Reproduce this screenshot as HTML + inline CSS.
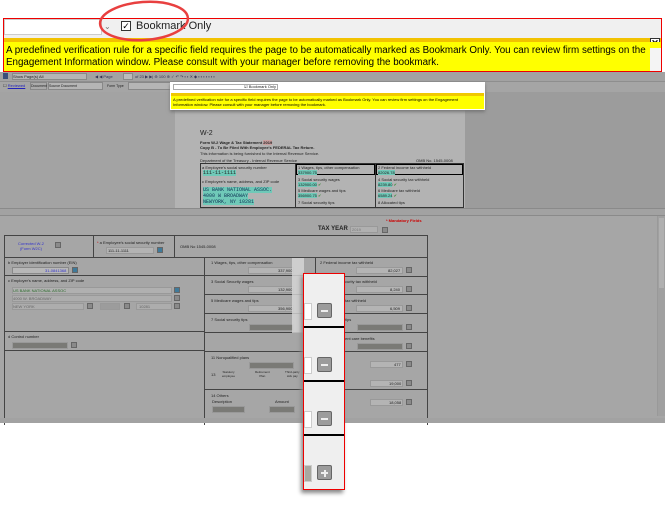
<!DOCTYPE html>
<html><head><meta charset="utf-8"><style>
*{margin:0;padding:0;box-sizing:border-box}
body{width:665px;height:507px;background:#fff;position:relative;overflow:hidden;font-family:"Liberation Sans",sans-serif}
.a{position:absolute}
.t{font-size:5px;color:#222;white-space:nowrap}
.box{position:absolute;border:1px solid #555}
.fld{position:absolute;background:#b4b4b4;border:1px solid #999;height:7px}
.dk{position:absolute;background:#7a7a76;border:1px solid #999;height:7px}
.btn{position:absolute;width:6px;height:6px;background:#8a8a8a;border:1px solid #666}
.v{font-size:5px;color:#333;text-align:right;padding-right:2px;line-height:6px}
</style></head><body>
<!-- app gray -->
<div class="a" style="left:0;top:72px;width:665px;height:351px;background:#a8a8a8"></div>
<!-- toolbars -->
<div class="a" style="left:0;top:72px;width:665px;height:10px;background:#a2a2a2;border-bottom:1px solid #8e8e8e"></div>
<div class="a t" style="left:3px;top:73px;width:5px;height:6px;background:#3a4f7a"></div>
<div class="a" style="left:12px;top:73px;width:75px;height:7px;background:#b5b5b5;border:1px solid #888"></div>
<div class="a t" style="left:13px;top:74px;font-size:4px">Show Page(s)  All</div>
<div class="a t" style="left:95px;top:74px;font-size:4px;color:#335">◀ ◀ Page</div>
<div class="a" style="left:123px;top:73px;width:10px;height:7px;background:#bbb;border:1px solid #888"></div>
<div class="a t" style="left:135px;top:74px;font-size:4px;color:#335">of 23 ▶ ▶|  ⊕ 100 ⊕ ✓ ↶ ↷  ▪ ▪ ✕ ◆ ▪ ▪ ▪ ▪ ▪ ▪ ▪</div>
<div class="a" style="left:0;top:82px;width:665px;height:10px;background:#a5a5a5"></div>
<div class="a t" style="left:3px;top:83px;font-size:4px">☐ <u style="color:#22b">Reviewed</u></div>
<div class="a" style="left:30px;top:82px;width:17px;height:8px;border:1px solid #888;background:#aaa"></div>
<div class="a t" style="left:31px;top:84px;font-size:3.5px">Document Type</div>
<div class="a" style="left:48px;top:82px;width:55px;height:8px;background:#b5b5b5;border:1px solid #888"></div>
<div class="a t" style="left:49px;top:84px;font-size:3.5px">Source Document</div>
<div class="a t" style="left:107px;top:84px;font-size:3.5px">Form Type</div>
<div class="a" style="left:128px;top:82px;width:45px;height:8px;background:#b5b5b5;border:1px solid #888"></div>
<!-- doc area -->
<div class="a" style="left:175px;top:92px;width:294px;height:116px;background:#b3b3b3"></div>
<div class="a" style="left:465px;top:92px;width:200px;height:116px;background:#9c9c9c"></div>
<div class="a" style="left:0px;top:92px;width:175px;height:116px;background:#a3a3a3"></div>
<!-- small callout -->
<div class="a" style="left:170px;top:82px;width:315px;height:28px;background:#fff;box-shadow:0 2px 3px #777"></div>
<div class="a" style="left:173px;top:84px;width:105px;height:6px;border:1px solid #aaa"></div>
<div class="a t" style="left:244px;top:84px;font-size:4px">☑ Bookmark Only</div>
<div class="a" style="left:171px;top:93px;width:313px;height:3px;background:#f0c800"></div>
<div class="a" style="left:171px;top:96px;width:313px;height:13px;background:#ffff00"></div>
<div class="a" style="left:173px;top:97px;font-size:4px;line-height:5px;color:#000;width:300px">A predefined verification rule for a specific field requires the page to be automatically marked as Bookmark Only. You can review firm settings on the Engagement Information window. Please consult with your manager before removing the bookmark.</div>
<!-- W-2 content -->
<div class="a t" style="left:200px;top:130px;font-size:7px">W-2</div>
<div class="a t" style="left:200px;top:140px;font-size:4px;font-weight:bold">Form W-2 Wage &amp; Tax Statement <span style="background:#c9a0a0">2019</span><br>Copy B - To Be Filed With Employee's FEDERAL Tax Return.</div>
<div class="a t" style="left:200px;top:151px;font-size:4px">This information is being furnished to the Internal Revenue Service.</div>
<div class="a t" style="left:200px;top:158px;font-size:4px">Department of the Treasury - Internal Revenue Service</div>
<div class="a t" style="left:416px;top:158px;font-size:4px">OMB No. 1545-0008</div>
<div class="a" style="left:200px;top:163px;width:264px;height:45px;border:1px solid #333"></div>
<div class="a" style="left:295px;top:163px;width:1px;height:45px;background:#333"></div>
<div class="a" style="left:375px;top:163px;width:1px;height:45px;background:#333"></div>
<div class="a" style="left:296px;top:164px;width:79px;height:11px;border:1px solid #000"></div>
<div class="a" style="left:376px;top:164px;width:87px;height:11px;border:1px solid #000"></div>
<div class="a t" style="left:202px;top:165px;font-size:4px">a Employee's social security number</div>
<div class="a t" style="left:203px;top:170px;font-size:5px;background:#6fc9b8;font-family:'Liberation Mono'">111-11-1111</div>
<div class="a t" style="left:202px;top:179px;font-size:4px">c Employee's name, address, and ZIP code</div>
<div class="a t" style="left:203px;top:187px;font-size:5px;line-height:6px;font-family:'Liberation Mono';color:#135"><span style="background:#6fc9b8">US BANK NATIONAL ASSOC.</span><br><span style="background:#6fc9b8">4000 W BROADWAY</span><br><span style="background:#6fc9b8">NEWYORK, NY 10281</span></div>
<div class="a t" style="left:298px;top:165px;font-size:4px">1 Wages, tips, other compensation<br><span style="background:#6fc9b8">337900.75</span></div>
<div class="a t" style="left:378px;top:165px;font-size:4px">2 Federal income tax withheld<br><span style="background:#6fc9b8">82026.78</span></div>
<div class="a t" style="left:298px;top:177px;font-size:4px">3 Social security wages<br><span style="background:#6fc9b8">132900.00</span> <span style="color:#383">✔</span></div>
<div class="a t" style="left:378px;top:177px;font-size:4px">4 Social security tax withheld<br><span style="background:#6fc9b8">8239.80</span> <span style="color:#383">✔</span></div>
<div class="a t" style="left:298px;top:188px;font-size:4px">5 Medicare wages and tips<br><span style="background:#6fc9b8">356900.75</span> <span style="color:#383">✔</span></div>
<div class="a t" style="left:378px;top:188px;font-size:4px">6 Medicare tax withheld<br><span style="background:#6fc9b8">6589.24</span> <span style="color:#383">✔</span></div>
<div class="a t" style="left:298px;top:200px;font-size:4px">7 Social security tips</div>
<div class="a t" style="left:378px;top:200px;font-size:4px">8 Allocated tips</div>
<!-- separator -->
<div class="a" style="left:0;top:208px;width:665px;height:8px;background:#a2a2a2;border-top:1px solid #8a8a8a;border-bottom:1px solid #8a8a8a"></div>
<div class="a" style="left:0;top:216px;width:665px;height:207px;background:#a6a6a6"></div>
<div class="a" style="left:657px;top:216px;width:8px;height:200px;background:#a0a0a0;border-left:1px solid #999"></div>
<div class="a" style="left:659px;top:218px;width:5px;height:70px;background:#b0b0b0"></div>
<div class="a t" style="left:386px;top:218px;font-size:4px;color:#c00;font-weight:bold">* Mandatory Fields</div>
<div class="a t" style="left:318px;top:226px;font-size:6px;font-weight:bold">TAX YEAR</div>
<div class="a" style="left:350px;top:226px;width:28px;height:7px;background:#b0b0b0;border:1px solid #999"></div>
<div class="a t" style="left:352px;top:227px;font-size:4px;color:#777">2019</div>
<div class="btn" style="left:382px;top:227px"></div>
<!-- form table -->
<div class="box" style="left:4px;top:235px;width:424px;height:190px;border:1px solid #444;border-bottom:none"></div>
<div class="a" style="left:4px;top:257px;width:424px;height:1px;background:#444"></div>
<div class="a" style="left:93px;top:235px;width:1px;height:22px;background:#444"></div>
<div class="a" style="left:174px;top:235px;width:1px;height:22px;background:#444"></div>
<div class="a" style="left:204px;top:257px;width:1px;height:168px;background:#444"></div>
<div class="a" style="left:315px;top:257px;width:1px;height:168px;background:#444"></div>
<div class="a" style="left:4px;top:275px;width:200px;height:1px;background:#444"></div>
<div class="a" style="left:4px;top:331px;width:200px;height:1px;background:#444"></div>
<div class="a" style="left:4px;top:350px;width:200px;height:1px;background:#444"></div>
<div class="a t" style="left:18px;top:241px;font-size:4px;color:#33c;text-align:center;line-height:5px">Corrected W-2<br>(Form W2C)</div>
<div class="btn" style="left:55px;top:242px"></div>
<div class="a t" style="left:97px;top:240px;font-size:4px"><span style="color:#c00">*</span> a Employee's social security number</div>
<div class="a" style="left:106px;top:247px;width:48px;height:7px;background:#b3b3b3;border:1px solid #999"></div>
<div class="a t" style="left:108px;top:248px;font-size:4px">111-11-1111</div>
<div class="btn" style="left:157px;top:247px;background:#3f7a9a"></div>
<div class="a t" style="left:180px;top:244px;font-size:4px">OMB No 1545-0008</div>
<div class="a t" style="left:8px;top:260px;font-size:4px">b Employer identification number (EIN)</div>
<div class="a" style="left:12px;top:267px;width:57px;height:7px;background:#b7b7b7;border:1px solid #888"></div>
<div class="a t" style="left:45px;top:268px;font-size:4px;color:#33c">31-0841368</div>
<div class="btn" style="left:72px;top:267px;background:#3f7a9a"></div>
<div class="a t" style="left:8px;top:278px;font-size:4px">c Employer's name, address, and ZIP code</div>
<div class="a" style="left:12px;top:287px;width:160px;height:7px;background:#b0b0b0;border:1px solid #999"></div>
<div class="a t" style="left:13px;top:288px;font-size:4px;color:#2a6a2a">US BANK NATIONAL ASSOC</div>
<div class="btn" style="left:174px;top:287px;background:#3f7a9a"></div>
<div class="a" style="left:12px;top:295px;width:160px;height:7px;background:#adadad;border:1px solid #999"></div>
<div class="a t" style="left:13px;top:296px;font-size:4px;color:#666">4000 W. BROADWAY</div>
<div class="btn" style="left:174px;top:295px"></div>
<div class="a" style="left:12px;top:303px;width:72px;height:7px;background:#adadad;border:1px solid #999"></div>
<div class="a t" style="left:13px;top:304px;font-size:4px;color:#666">NEW YORK</div>
<div class="btn" style="left:87px;top:303px"></div>
<div class="a" style="left:100px;top:303px;width:20px;height:7px;background:#9c9c9c;border:1px solid #999"></div>
<div class="btn" style="left:124px;top:303px"></div>
<div class="a" style="left:136px;top:303px;width:36px;height:7px;background:#adadad;border:1px solid #999"></div>
<div class="a t" style="left:139px;top:304px;font-size:4px;color:#666">10281</div>
<div class="btn" style="left:174px;top:303px"></div>
<div class="a t" style="left:8px;top:334px;font-size:4px">d Control number</div>
<div class="dk" style="left:12px;top:342px;width:56px"></div>
<div class="btn" style="left:71px;top:342px"></div>
<!-- middle column -->
<div class="a t" style="left:211px;top:260px;font-size:4px">1 Wages, tips, other compensation</div>
<div class="fld" style="left:248px;top:267px;width:46px"></div><div class="a t" style="left:278px;top:268px;font-size:4px">337,900</div>
<div class="a t" style="left:211px;top:279px;font-size:4px">3 Social Security wages</div>
<div class="fld" style="left:248px;top:286px;width:46px"></div><div class="a t" style="left:278px;top:287px;font-size:4px">132,900</div>
<div class="a t" style="left:211px;top:298px;font-size:4px">5 Medicare wages and tips</div>
<div class="fld" style="left:248px;top:305px;width:46px"></div><div class="a t" style="left:278px;top:306px;font-size:4px">356,900</div>
<div class="a t" style="left:211px;top:317px;font-size:4px">7 Social security tips</div>
<div class="dk" style="left:249px;top:324px;width:45px"></div>
<div class="a" style="left:204px;top:275px;width:111px;height:1px;background:#444"></div>
<div class="a" style="left:204px;top:294px;width:111px;height:1px;background:#444"></div>
<div class="a" style="left:204px;top:313px;width:111px;height:1px;background:#444"></div>
<div class="a" style="left:204px;top:332px;width:111px;height:1px;background:#444"></div>
<div class="a" style="left:204px;top:351px;width:111px;height:1px;background:#444"></div>
<div class="a" style="left:204px;top:389px;width:111px;height:1px;background:#444"></div>
<div class="a t" style="left:211px;top:355px;font-size:4px">11 Nonqualified plans</div>
<div class="dk" style="left:249px;top:362px;width:45px"></div>
<div class="a t" style="left:211px;top:372px;font-size:4px">13</div>
<div class="a t" style="left:222px;top:370px;font-size:3px;text-align:center">Statutory<br>employee</div>
<div class="a t" style="left:255px;top:370px;font-size:3px;text-align:center">Retirement<br>Plan</div>
<div class="a t" style="left:285px;top:370px;font-size:3px;text-align:center">Third-party<br>sick pay</div>
<div class="a t" style="left:211px;top:393px;font-size:4px">14 Others</div>
<div class="a t" style="left:212px;top:399px;font-size:4px">Description</div>
<div class="a t" style="left:275px;top:399px;font-size:4px">Amount</div>
<div class="dk" style="left:212px;top:406px;width:33px"></div>
<div class="dk" style="left:269px;top:406px;width:26px"></div>
<!-- right column -->
<div class="a" style="left:315px;top:276px;width:113px;height:1px;background:#444"></div>
<div class="a" style="left:315px;top:294px;width:113px;height:1px;background:#444"></div>
<div class="a" style="left:315px;top:313px;width:113px;height:1px;background:#444"></div>
<div class="a" style="left:315px;top:332px;width:113px;height:1px;background:#444"></div>
<div class="a" style="left:315px;top:351px;width:113px;height:1px;background:#444"></div>
<div class="a" style="left:315px;top:389px;width:113px;height:1px;background:#444"></div>
<div class="a t" style="left:320px;top:260px;font-size:4px">2 Federal income tax withheld</div>
<div class="fld" style="left:356px;top:267px;width:47px"></div><div class="a t" style="left:388px;top:268px;font-size:4px">82,027</div>
<div class="a t" style="left:345px;top:279px;font-size:4px">curity tax withheld</div>
<div class="fld" style="left:356px;top:286px;width:47px"></div><div class="a t" style="left:390px;top:287px;font-size:4px">8,240</div>
<div class="a t" style="left:345px;top:298px;font-size:4px">tax withheld</div>
<div class="fld" style="left:356px;top:305px;width:47px"></div><div class="a t" style="left:390px;top:306px;font-size:4px">6,509</div>
<div class="a t" style="left:345px;top:317px;font-size:4px">tips</div>
<div class="dk" style="left:357px;top:324px;width:46px"></div>
<div class="a t" style="left:345px;top:336px;font-size:4px">ent care benefits</div>
<div class="dk" style="left:357px;top:343px;width:46px"></div>
<div class="fld" style="left:370px;top:361px;width:33px"></div><div class="a t" style="left:394px;top:362px;font-size:4px">477</div>
<div class="fld" style="left:370px;top:380px;width:33px"></div><div class="a t" style="left:389px;top:381px;font-size:4px">19,000</div>
<div class="fld" style="left:370px;top:399px;width:33px"></div><div class="a t" style="left:389px;top:400px;font-size:4px">18,058</div>
<div class="btn" style="left:406px;top:267px"></div><div class="btn" style="left:406px;top:286px"></div><div class="btn" style="left:406px;top:305px"></div><div class="btn" style="left:406px;top:324px"></div><div class="btn" style="left:406px;top:343px"></div><div class="btn" style="left:406px;top:361px"></div><div class="btn" style="left:406px;top:380px"></div><div class="btn" style="left:406px;top:399px"></div>
<div class="a" style="left:0;top:418px;width:665px;height:5px;background:#a2a2a2"></div>
<!-- zoom popout -->
<div class="a" style="left:292px;top:258px;width:12px;height:75px;background:#d8d8d8;opacity:.8"></div>
<div class="a" style="left:303px;top:273px;width:42px;height:217px;background:#efefef;border:1px solid #e00;box-shadow:-2px 3px 4px #888"></div>
<div class="a" style="left:304px;top:326px;width:40px;height:2px;background:#000"></div>
<div class="a" style="left:304px;top:380px;width:40px;height:2px;background:#000"></div>
<div class="a" style="left:304px;top:434px;width:40px;height:2px;background:#000"></div>
<div class="a" style="left:317px;top:303px;width:15px;height:15px;background:#9c9c9c;border:1px solid #666;border-radius:2px"><div class="a" style="left:3px;top:6px;width:7px;height:2px;background:#eee"></div></div>
<div class="a" style="left:317px;top:357px;width:15px;height:15px;background:#9c9c9c;border:1px solid #666;border-radius:2px"><div class="a" style="left:3px;top:6px;width:7px;height:2px;background:#eee"></div></div>
<div class="a" style="left:317px;top:411px;width:15px;height:15px;background:#9c9c9c;border:1px solid #666;border-radius:2px"><div class="a" style="left:3px;top:6px;width:7px;height:2px;background:#eee"></div></div>
<div class="a" style="left:317px;top:465px;width:15px;height:15px;background:#9c9c9c;border:1px solid #666;border-radius:2px"><div class="a" style="left:3px;top:6px;width:7px;height:2px;background:#eee"></div><div class="a" style="left:5.5px;top:3.5px;width:2px;height:7px;background:#eee"></div></div>
<div class="a" style="left:304px;top:303px;width:8px;height:17px;border:1px solid #ccc;background:#fff"></div>
<div class="a" style="left:304px;top:357px;width:8px;height:17px;border:1px solid #ccc;background:#fff"></div>
<div class="a" style="left:304px;top:411px;width:8px;height:17px;border:1px solid #ccc;background:#fff"></div>
<div class="a" style="left:304px;top:465px;width:8px;height:17px;border:1px solid #ccc;background:#a8a8a0"></div>
<!-- big callout -->
<div class="a" style="left:3px;top:18px;width:659px;height:54px;border:1px solid #e00;background:#f0f0f0"></div>
<div class="a" style="left:4px;top:19px;width:98px;height:16px;background:#fff;border:1px solid #ccc"></div>
<div class="a t" style="left:104px;top:22px;font-size:8px;color:#777">⌄</div>
<div class="a" style="left:121px;top:21px;width:10px;height:10px;border:1px solid #333;background:#fff;font-size:9px;line-height:9px;text-align:center">✓</div>
<div class="a" style="left:136px;top:20px;font-size:11px;color:#222;white-space:nowrap">Bookmark Only</div>
<div class="a" style="left:4px;top:38px;width:657px;height:4px;background:#f2c200"></div>
<div class="a" style="left:650px;top:38px;width:10px;height:10px;background:#fff;border:1px solid #333;font-size:9px;line-height:8px;text-align:center;font-weight:bold">✕</div>
<div class="a" style="left:4px;top:42px;width:657px;height:29px;background:#ffff00"></div>
<div class="a" style="left:650px;top:48px;width:11px;height:23px;background:#f4f4f4"></div>
<div class="a" style="left:6px;top:45px;width:642px;font-size:9.8px;line-height:12px;color:#000">A predefined verification rule for a specific field requires the page to be automatically marked as Bookmark Only. You can review firm settings on the Engagement Information window. Please consult with your manager before removing the bookmark.</div>
<!-- red ellipse -->
<svg class="a" style="left:95px;top:0" width="100" height="44"><ellipse cx="49" cy="21" rx="44" ry="19" fill="none" stroke="#e84040" stroke-width="2.5" transform="rotate(-4 49 21)"/></svg>
</body></html>
